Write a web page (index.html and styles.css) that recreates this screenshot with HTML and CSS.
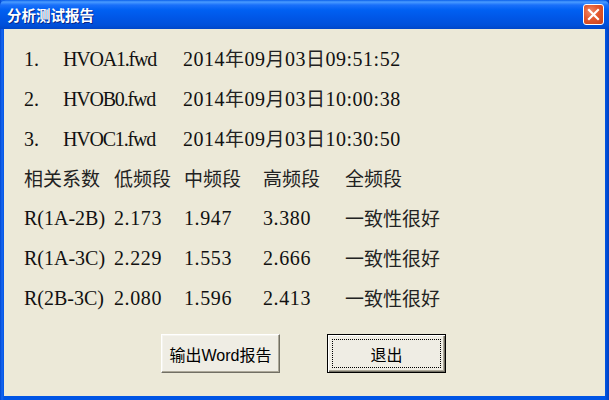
FILE: index.html
```
<!DOCTYPE html>
<html>
<head>
<meta charset="utf-8">
<link rel="stylesheet" href="styles.css">
</head>
<body>
<div class="window">
  <div class="titlebar">
    <span class="title">分析测试报告</span>
    <span class="close"><svg width="13" height="13" viewBox="0 0 13 13"><path d="M2 2 L11 11 M11 2 L2 11" stroke="#fff" stroke-width="2.2" stroke-linecap="square"/></svg></span>
  </div>
  <div class="body">
    <div class="row files"><span>1.</span><span class="fn">HVOA1.fwd</span><span class="date">2014<span class="c">年</span>09<span class="c">月</span>03<span class="c">日</span>09:51:52</span></div>
    <div class="row files"><span>2.</span><span class="fn">HVOB0.fwd</span><span class="date">2014<span class="c">年</span>09<span class="c">月</span>03<span class="c">日</span>10:00:38</span></div>
    <div class="row files"><span>3.</span><span class="fn">HVOC1.fwd</span><span class="date">2014<span class="c">年</span>09<span class="c">月</span>03<span class="c">日</span>10:30:50</span></div>
    <div class="row table"><span class="c">相关系数</span><span class="c">低频段</span><span class="c">中频段</span><span class="c">高频段</span><span class="c">全频段</span></div>
    <div class="row table"><span>R(1A-2B)</span><span class="num">2.173</span><span class="num">1.947</span><span class="num">3.380</span><span class="c">一致性很好</span></div>
    <div class="row table"><span>R(1A-3C)</span><span class="num">2.229</span><span class="num">1.553</span><span class="num">2.666</span><span class="c">一致性很好</span></div>
    <div class="row table"><span>R(2B-3C)</span><span class="num">2.080</span><span class="num">1.596</span><span class="num">2.413</span><span class="c">一致性很好</span></div>
    <div class="buttons">
      <button class="btn">输出Word报告</button>
      <button class="btn default"><span class="focus">退出</span></button>
    </div>
  </div>
</div>
</body>
</html>
```
FILE: styles.css
```
html, body {
  margin: 0;
  padding: 0;
  background: #ECE9D8;
}
.window {
  width: 609px;
  height: 400px;
  box-sizing: border-box;
  display: flex;
  flex-direction: column;
  padding: 0 4px 4px 4px;
  background: linear-gradient(90deg, #0047D0 0, #1666F0 2px, #0055E5 4px, #0055E5 calc(100% - 4px), #0040C0 100%);
}
.titlebar {
  height: 29px;
  margin: 0 -4px;
  display: flex;
  align-items: center;
  justify-content: space-between;
  padding: 0 5px 0 7px;
  background: linear-gradient(180deg, #0A5FEA 0, #4A9CFF 2px, #1A70FA 5px, #0060F2 10px, #0056E6 18px, #0050DA 25px, #0046C8 29px);
  border-radius: 6px 6px 0 0;
}
.title {
  font-family: "Noto Sans CJK SC", sans-serif;
  font-weight: bold;
  font-size: 14.5px;
  color: #fff;
  text-shadow: 1px 1px 0 #0A2A8A;
}
.close {
  width: 21px;
  height: 21px;
  box-sizing: border-box;
  border: 1px solid #fff;
  border-radius: 3px;
  background: radial-gradient(circle at 35% 35%, #F08A6A 0, #E2572E 45%, #C8401A 100%);
  display: flex;
  align-items: center;
  justify-content: center;
}
.body {
  flex: 1;
  background: #ECE9D8;
  padding: 9px 20px 0 20px;
}
.row {
  display: grid;
  height: 40px;
  line-height: 40px;
  align-items: center;
  font-family: "Liberation Serif", "Noto Sans CJK SC", serif;
  font-size: 20px;
  color: #111;
  white-space: nowrap;
}
.row .c {
  font-family: "Noto Sans CJK SC", sans-serif;
  font-size: 19px;
  color: #222;
}
.row .fn {
  letter-spacing: -1.2px;
}
.row .date {
  letter-spacing: 0.5px;
}
.row .num {
  letter-spacing: 0.6px;
}
.files {
  grid-template-columns: 39px 120px auto;
}
.table {
  grid-template-columns: 90px 70px 79px 82px auto;
}
.buttons {
  display: flex;
  gap: 47px;
  margin-top: 16px;
  padding-left: 137px;
}
.btn {
  width: 119px;
  height: 39px;
  box-sizing: border-box;
  margin: 0;
  padding: 0;
  font-family: "Liberation Sans", "Noto Sans CJK SC", sans-serif;
  font-size: 16px;
  color: #000;
  background: #EFEDE4;
  border: 1px solid;
  border-color: #FFFFFF #716F64 #716F64 #FFFFFF;
  box-shadow: inset -1px -1px 0 #ACA899, inset 1px 1px 0 #F5F4EE;
  display: flex;
  align-items: center;
  justify-content: center;
}
.btn.default {
  border: 1px solid #000;
  box-shadow: inset 1px 1px 0 #fff, inset -1px -1px 0 #716F64, inset -2px -2px 0 #ACA899;
  padding: 4px;
}
.focus {
  width: 100%;
  height: 100%;
  box-sizing: border-box;
  border: 1px dotted #000;
  display: flex;
  align-items: center;
  justify-content: center;
}
```
